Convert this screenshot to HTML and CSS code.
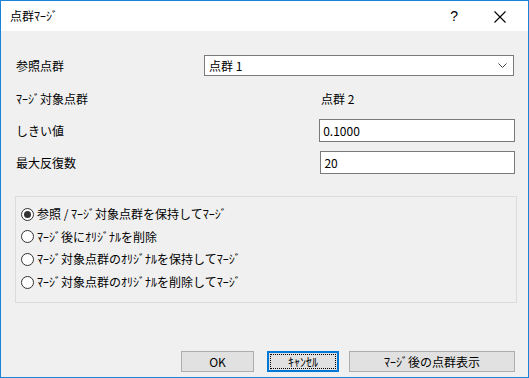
FILE: index.html
```html
<!DOCTYPE html>
<html lang="ja">
<head>
    <meta charset="UTF-8">
    <title>点群ﾏｰｼﾞ</title>
    <link rel="stylesheet" href="styles.css">
</head>
<body>
    <div class="window">
        <div class="titlebar">
            <span class="title">点群ﾏｰｼﾞ</span>
            <span class="help">?</span>
            <span class="close">
                <svg width="12" height="12" viewBox="0 0 12 12"><path d="M0.5 0.5 L11.5 11.5 M11.5 0.5 L0.5 11.5" stroke="#000" stroke-width="1.1" fill="none"/></svg>
            </span>
        </div>

        <div class="content">
            <div class="row row-ref">
                <span class="label label-ref">参照点群</span>
                <div class="combo">
                    <span>点群 1</span>
                    <svg width="9" height="5" viewBox="0 0 9 5"><path d="M0.5 0.5 L4.5 4.5 L8.5 0.5" stroke="#444" stroke-width="1" fill="none"/></svg>
                </div>
            </div>
            <div class="row row-target">
                <span class="label label-wide">ﾏｰｼﾞ対象点群</span>
                <span class="value">点群 2</span>
            </div>
            <div class="row row-threshold">
                <span class="label label-wide">しきい値</span>
                <div class="field field-threshold">0.1000</div>
            </div>
            <div class="row row-iter">
                <span class="label label-wide">最大反復数</span>
                <div class="field field-iter">20</div>
            </div>

            <div class="group">
                <label class="radio checked"><span class="dot"></span>参照 / ﾏｰｼﾞ対象点群を保持してﾏｰｼﾞ</label>
                <label class="radio"><span class="dot"></span>ﾏｰｼﾞ後にｵﾘｼﾞﾅﾙを削除</label>
                <label class="radio"><span class="dot"></span>ﾏｰｼﾞ対象点群のｵﾘｼﾞﾅﾙを保持してﾏｰｼﾞ</label>
                <label class="radio"><span class="dot"></span>ﾏｰｼﾞ対象点群のｵﾘｼﾞﾅﾙを削除してﾏｰｼﾞ</label>
            </div>

            <div class="buttons">
                <button class="btn btn-ok">OK</button>
                <button class="btn btn-cancel focused"><span>ｷｬﾝｾﾙ</span></button>
                <button class="btn btn-show">ﾏｰｼﾞ後の点群表示</button>
            </div>
        </div>
    </div>
</body>
</html>
```

FILE: styles.css
```css
* {
    box-sizing: border-box;
}

body {
    margin: 0;
    font-family: "Noto Sans CJK JP", "Liberation Sans", sans-serif;
    font-size: 12px;
    color: #000;
}

.window {
    width: 529px;
    height: 378px;
    border: 1px solid #1883d7;
    background-color: #f0f0f0;
    display: flex;
    flex-direction: column;
}

.titlebar {
    height: 30px;
    background-color: #fff;
    display: flex;
    align-items: center;
    padding-left: 9px;
}

.title {
    flex-grow: 1;
    line-height: 1;
}

.help {
    font-family: "Liberation Sans", sans-serif;
    font-size: 14px;
    margin-right: 36px;
}

.close {
    display: flex;
    margin-right: 22px;
    margin-top: 1px;
}

.content {
    flex-grow: 1;
    display: flex;
    flex-direction: column;
    padding: 0 13px 5px 14px;
}

.row {
    display: flex;
    align-items: center;
}

.label {
    padding-left: 1px;
    line-height: 1;
}

.label-ref {
    width: 189px;
}

.label-wide {
    width: 306px;
}

.row-ref {
    margin-top: 24px;
    height: 21px;
}

.row-target {
    margin-top: 12px;
    height: 21px;
}

.row-threshold {
    margin-top: 10px;
    height: 23px;
}

.row-iter {
    margin-top: 9px;
    height: 23px;
}

.combo {
    width: 310px;
    height: 21px;
    background-color: #fff;
    border: 1px solid #7a7a7a;
    display: flex;
    align-items: center;
    justify-content: space-between;
    padding: 0 6px 0 4px;
}

.field {
    height: 23px;
    background-color: #fff;
    border: 1px solid #7a7a7a;
    display: flex;
    align-items: center;
    padding-left: 3px;
}

.field-threshold {
    width: 197px;
}

.field-iter {
    width: 195px;
}

.group {
    margin-top: 22px;
    width: 502px;
    height: 107px;
    border: 1px solid #dcdcdc;
    padding: 6px 0 0 5px;
    display: flex;
    flex-direction: column;
}

.radio {
    height: 22.6px;
    display: flex;
    align-items: center;
    line-height: 1;
}

.dot {
    width: 13px;
    height: 13px;
    border: 1px solid #333;
    border-radius: 50%;
    background-color: #fff;
    margin-right: 3px;
    display: flex;
    align-items: center;
    justify-content: center;
}

.radio.checked .dot::after {
    content: "";
    width: 7px;
    height: 7px;
    border-radius: 50%;
    background-color: #333;
}

.buttons {
    margin-top: auto;
    display: flex;
    justify-content: flex-end;
}

.btn {
    height: 21px;
    background-color: #e1e1e1;
    border: 1px solid #adadad;
    font-family: inherit;
    font-size: 12px;
    color: #000;
    padding: 0;
    display: flex;
    align-items: center;
    justify-content: center;
}

.btn-ok {
    width: 73px;
    margin-right: 13px;
}

.btn-cancel {
    width: 72px;
    margin-right: 10px;
}

.btn-show {
    width: 166px;
}

.focused {
    border: 2px solid #0078d7;
    padding: 1px;
}

.focused span {
    width: 100%;
    height: 100%;
    border: 1px dotted #000;
    display: flex;
    align-items: center;
    justify-content: center;
}
```
